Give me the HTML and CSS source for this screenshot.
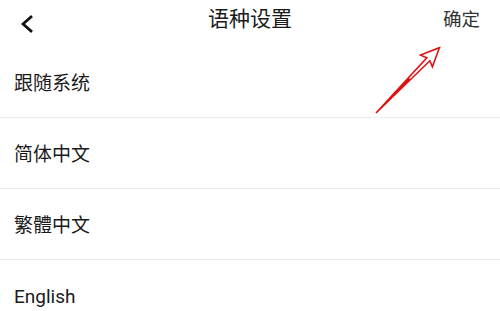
FILE: index.html
```html
<!DOCTYPE html>
<html lang="zh-CN">
<head>
<meta charset="utf-8">
<title>语种设置</title>
<link rel="stylesheet" href="styles.css">
</head>
<body>
<div class="page">
  <header class="bar">
    <div class="bar-left">
      <svg class="back" width="14" height="20" viewBox="0 0 14 20">
        <path d="M11 3 L3 10 L11 17" fill="none" stroke="#111" stroke-width="2.7" stroke-linecap="square" stroke-linejoin="miter"/>
      </svg>
    </div>
    <div class="bar-title">语种设置</div>
    <div class="bar-right"><span class="confirm">确定</span></div>
  </header>
  <ul class="list">
    <li class="item">跟随系统</li>
    <li class="item">简体中文</li>
    <li class="item">繁體中文</li>
    <li class="item">English</li>
  </ul>
  <svg class="annot" width="500" height="311" viewBox="0 0 500 311">
    <g transform="translate(376 113) rotate(-45.5)">
      <polygon points="0,0 75,-2.4 72.5,-8.8 91,-0.5 72.5,7.8 75,1.8" fill="#fff" stroke="#e01010" stroke-width="1.6" stroke-linejoin="miter"/>
      <polygon points="0,0 48,-1.4 48,1.2" fill="#e01010"/>
    </g>
  </svg>
</div>
</body>
</html>
```

FILE: styles.css
```css
* { box-sizing: border-box; }
html, body { margin: 0; padding: 0; background: #fff; }
body {
  font-family: Roboto, "Noto Sans CJK SC", sans-serif;
  color: #1a1a1a;
}
.page {
  position: relative;
  width: 500px;
  height: 311px;
  overflow: hidden;
}
.bar {
  height: 47px;
  display: grid;
  grid-template-columns: 1fr auto 1fr;
  align-items: center;
}
.bar-left {
  display: flex;
  align-items: center;
  padding-left: 20px;
}
.back { display: block; margin-top: 0; }
.bar-title {
  font-size: 21px;
  line-height: 1;
  color: #1a1a1a;
  padding-bottom: 8px;
}
.bar-right {
  display: flex;
  justify-content: flex-end;
  padding-right: 20px;
}
.confirm {
  font-size: 18.5px;
  line-height: 1;
  color: #333;
  padding-bottom: 7px;
}
.list {
  list-style: none;
  margin: 0;
  padding: 0;
}
.item {
  height: 71px;
  display: flex;
  align-items: center;
  padding-left: 14px;
  padding-top: 2px;
  font-size: 19px;
  line-height: 1;
  color: #1a1a1a;
  border-bottom: 1px solid #ececec;
}
.item:last-child { border-bottom: none; }
.annot {
  position: absolute;
  left: 0;
  top: 0;
  pointer-events: none;
}
```
